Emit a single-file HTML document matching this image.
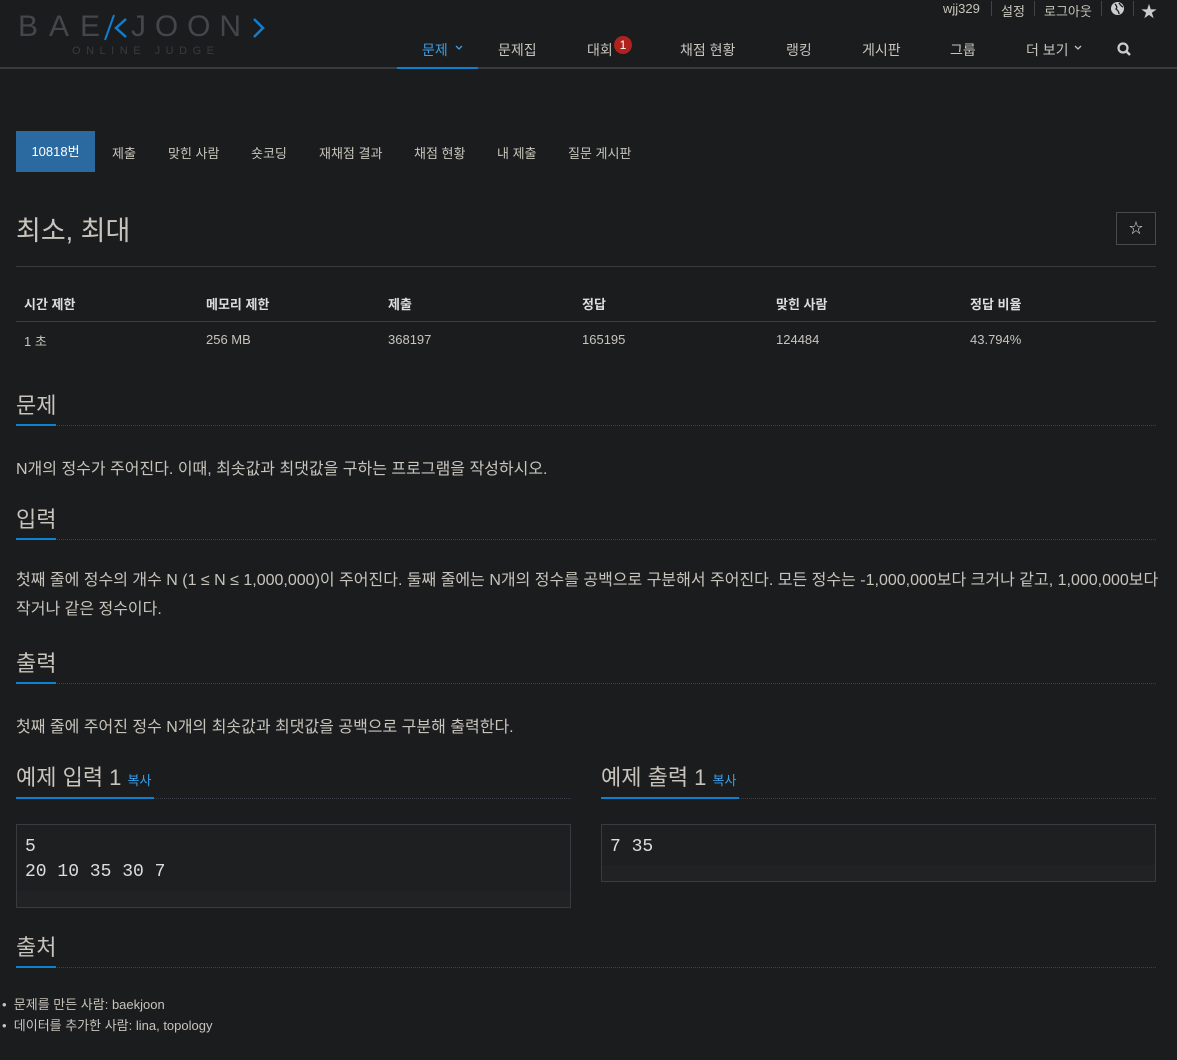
<!DOCTYPE html>
<html><head><meta charset="utf-8"><style>
*{margin:0;padding:0;box-sizing:border-box}
body{width:1177px;height:1060px;background:#1b1c1e;color:#c8c4bc;font-family:"Liberation Sans","Noto Sans CJK KR",sans-serif;font-size:14px;position:relative;overflow:hidden}
.a{position:absolute;white-space:nowrap}
.nav{font-size:14px;color:#c8c4bc}
.h{font-size:22px;color:#c8c4bc}
.ul{position:absolute;height:2px;background:#0f7fd0}
.dl{position:absolute;border-top:1px dotted #3a3f48}
.th{font-weight:bold;font-size:13px;color:#ddd}
.td{font-size:13px}
.p{font-size:16px}
.pre{position:absolute;border:1px solid #3a3b3e;background:#1e1f21;font-family:"Liberation Mono","DejaVu Sans Mono",monospace;font-size:18px;line-height:25px;padding:10px 8px;color:#ddd}
.pre .bot{position:absolute;left:0;right:0;bottom:0;height:16px;background:#202224}
.sep{position:absolute;top:1px;width:1px;height:15px;background:#444}
</style></head><body>

<svg class="a" style="left:18px;top:10px" width="260" height="48">
<text x="0" y="26" font-family="Liberation Sans" font-size="30" fill="#45464a" textLength="82" lengthAdjust="spacing">BAE</text>
<path d="M96 5 L87 30" stroke="#0f7fd0" stroke-width="2" fill="none"/>
<path d="M108 9 L98 18 L108 27" stroke="#0f7fd0" stroke-width="2.5" fill="none"/>
<text x="113" y="26" font-family="Liberation Sans" font-size="30" fill="#45464a" textLength="110" lengthAdjust="spacing">JOON</text>
<path d="M236 9 L245 18 L236 27" stroke="#0f7fd0" stroke-width="2.5" fill="none"/>
<text x="54" y="44" font-family="Liberation Sans" font-size="11" fill="#3a3b3e" textLength="142" lengthAdjust="spacing">ONLINE JUDGE</text>
</svg>

<div class="a" style="left:943px;top:1px;font-size:13px">wjj329</div>
<div class="sep" style="left:991px"></div>
<div class="a" style="left:1001px;top:1px;font-size:13px">설정</div>
<div class="sep" style="left:1034px"></div>
<div class="a" style="left:1044px;top:1px;font-size:13px">로그아웃</div>
<div class="sep" style="left:1101px"></div>
<svg class="a" style="left:1111px;top:2px" width="13" height="13"><circle cx="6.5" cy="6.5" r="6.5" fill="#ccc"/><path d="M4 2 Q7 5 5 7 Q8 9 8 12 M8 1 Q10 4 12 5" stroke="#1b1c1e" stroke-width="1.3" fill="none"/></svg>
<div class="sep" style="left:1133px"></div>
<div class="a" style="left:1141px;top:-2px;font-size:16px;color:#ccc">★</div>

<div class="a nav" style="left:422px;top:40px;color:#3a9fe8">문제</div>
<svg class="a" style="left:455px;top:45px" width="8" height="6"><path d="M1 1 L4 4 L7 1" stroke="#3a9fe8" stroke-width="1.3" fill="none"/></svg>
<div class="a nav" style="left:498px;top:40px">문제집</div>
<div class="a nav" style="left:587px;top:40px">대회</div>
<div class="a" style="left:614px;top:36px;width:18px;height:18px;border-radius:50%;background:#b0221e;color:#fff;font-size:12px;text-align:center;line-height:18px">1</div>
<div class="a nav" style="left:680px;top:40px">채점 현황</div>
<div class="a nav" style="left:786px;top:40px">랭킹</div>
<div class="a nav" style="left:862px;top:40px">게시판</div>
<div class="a nav" style="left:950px;top:40px">그룹</div>
<div class="a nav" style="left:1026px;top:40px">더 보기</div>
<svg class="a" style="left:1074px;top:45px" width="8" height="6"><path d="M1 1 L4 4 L7 1" stroke="#c8c4bc" stroke-width="1.3" fill="none"/></svg>
<svg class="a" style="left:1117px;top:42px" width="16" height="16"><circle cx="6" cy="6" r="4.5" stroke="#ccc" stroke-width="2.2" fill="none"/><path d="M9.5 9.5 L13 13" stroke="#ccc" stroke-width="2.5"/></svg>

<div class="a" style="left:0;top:67px;width:1177px;height:2px;background:#3a3b3d"></div>
<div class="a" style="left:397px;top:67px;width:81px;height:2px;background:#0f7fd0"></div>

<div class="a" style="left:16px;top:131px;width:79px;height:41px;background:#2a6aa0;color:#fff;font-size:13px;text-align:center;line-height:41px">10818번</div>
<div class="a td" style="left:112px;top:143px">제출</div>
<div class="a td" style="left:168px;top:143px">맞힌 사람</div>
<div class="a td" style="left:251px;top:143px">숏코딩</div>
<div class="a td" style="left:319px;top:143px">재채점 결과</div>
<div class="a td" style="left:414px;top:143px">채점 현황</div>
<div class="a td" style="left:497px;top:143px">내 제출</div>
<div class="a td" style="left:568px;top:143px">질문 게시판</div>

<div class="a" style="left:16px;top:209px;font-size:27px">최소, 최대</div>
<div class="a" style="left:1116px;top:212px;width:40px;height:33px;border:1px solid #4a4b4d;text-align:center;line-height:31px;font-size:14px;color:#ddd">☆</div>
<div class="a" style="left:16px;top:266px;width:1140px;height:1px;background:#3a3b3d"></div>

<div class="a th" style="left:24px;top:294px">시간 제한</div>
<div class="a th" style="left:206px;top:294px">메모리 제한</div>
<div class="a th" style="left:388px;top:294px">제출</div>
<div class="a th" style="left:582px;top:294px">정답</div>
<div class="a th" style="left:776px;top:294px">맞힌 사람</div>
<div class="a th" style="left:970px;top:294px">정답 비율</div>
<div class="a" style="left:16px;top:321px;width:1140px;height:1px;background:#3e3f42"></div>
<div class="a td" style="left:24px;top:331px">1 초</div>
<div class="a td" style="left:206px;top:332px">256 MB</div>
<div class="a td" style="left:388px;top:332px">368197</div>
<div class="a td" style="left:582px;top:332px">165195</div>
<div class="a td" style="left:776px;top:332px">124484</div>
<div class="a td" style="left:970px;top:332px">43.794%</div>

<div class="a h" style="left:16px;top:388px">문제</div>
<div class="dl" style="left:16px;top:425px;width:1140px"></div><div class="ul" style="left:16px;top:424px;width:40px"></div>
<div class="a p" style="left:16px;top:455px">N개의 정수가 주어진다. 이때, 최솟값과 최댓값을 구하는 프로그램을 작성하시오.</div>

<div class="a h" style="left:16px;top:502px">입력</div>
<div class="dl" style="left:16px;top:539px;width:1140px"></div><div class="ul" style="left:16px;top:538px;width:40px"></div>
<div class="a p" style="left:16px;top:566px;line-height:29px">첫째 줄에 정수의 개수 N (1 ≤ N ≤ 1,000,000)이 주어진다. 둘째 줄에는 N개의 정수를 공백으로 구분해서 주어진다. 모든 정수는 -1,000,000보다 크거나 같고, 1,000,000보다<br>작거나 같은 정수이다.</div>

<div class="a h" style="left:16px;top:646px">출력</div>
<div class="dl" style="left:16px;top:683px;width:1140px"></div><div class="ul" style="left:16px;top:682px;width:40px"></div>
<div class="a p" style="left:16px;top:713px">첫째 줄에 주어진 정수 N개의 최솟값과 최댓값을 공백으로 구분해 출력한다.</div>

<div class="a h" style="left:16px;top:760px">예제 입력 1 <span style="font-size:13px;color:#3a9fe8">복사</span></div>
<div class="dl" style="left:16px;top:798px;width:555px"></div><div class="ul" style="left:16px;top:797px;width:138px"></div>
<div class="pre" style="left:16px;top:824px;width:555px;height:84px"><div class="bot"></div><div style="position:relative">5<br>20 10 35 30 7</div></div>

<div class="a h" style="left:601px;top:760px">예제 출력 1 <span style="font-size:13px;color:#3a9fe8">복사</span></div>
<div class="dl" style="left:601px;top:798px;width:555px"></div><div class="ul" style="left:601px;top:797px;width:138px"></div>
<div class="pre" style="left:601px;top:824px;width:555px;height:58px"><div class="bot"></div><div style="position:relative">7 35</div></div>

<div class="a h" style="left:16px;top:930px">출처</div>
<div class="dl" style="left:16px;top:967px;width:1140px"></div><div class="ul" style="left:16px;top:966px;width:40px"></div>
<div class="a" style="left:2px;top:994px;font-size:13px;line-height:21px">• &nbsp;문제를 만든 사람: baekjoon<br>• &nbsp;데이터를 추가한 사람: lina, topology</div>
</body></html>
